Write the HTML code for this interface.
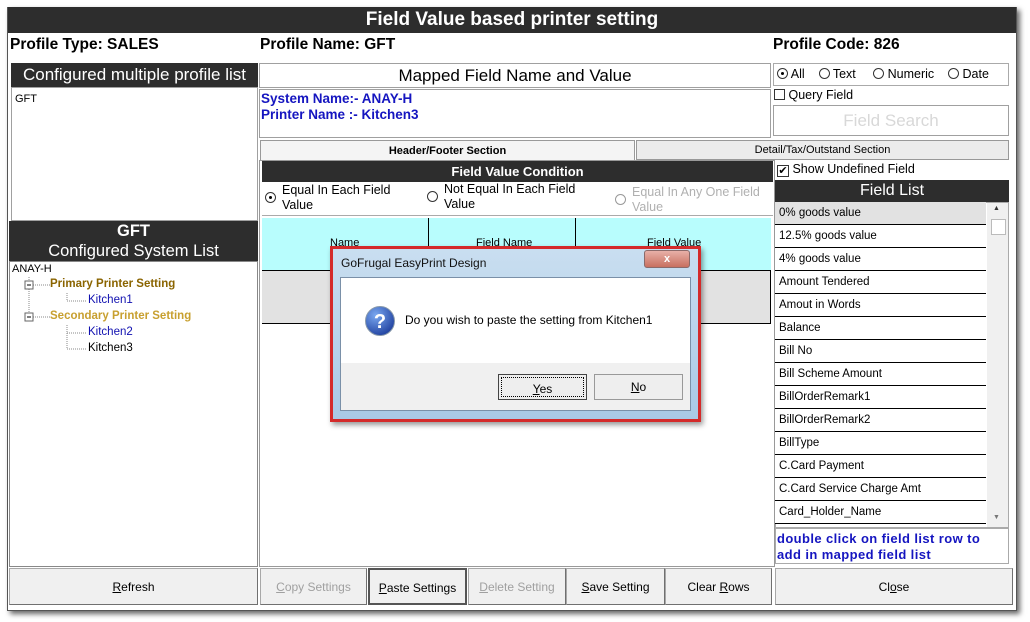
<!DOCTYPE html>
<html><head><meta charset="utf-8"><style>
*{box-sizing:border-box;margin:0;padding:0}
body{width:1030px;height:622px;background:#fff;font-family:"Liberation Sans",sans-serif;position:relative;overflow:hidden}
.a{position:absolute}
.dk{background:#2d2d2d;color:#fff;text-align:center}
.bx{border:1px solid #a0a0a0;background:#fff}
.btn{position:absolute;top:568px;height:37px;background:#f0f0f0;border:1px solid #a8a8a8;border-right-color:#707070;border-bottom-color:#707070;font-size:12px;text-align:center;line-height:36px;color:#000}
.dis{color:#a0a0a0}
.row{position:absolute;left:775px;width:211px;height:23px;border-bottom:1px solid #000;font-size:11.5px;line-height:22px;padding-left:4px;background:#fff}
.rad{display:inline-block;width:11px;height:11px;border:1px solid #333;border-radius:50%;vertical-align:-1px;position:relative}
.rad.on::after{content:"";position:absolute;left:3px;top:3px;width:3px;height:3px;border-radius:50%;background:#000}
</style></head><body>
<div class="a" style="left:7px;top:7px;width:1010px;height:604px;box-shadow:3px 3px 5px rgba(0,0,0,.6);background:#fff;border:1px solid #555"></div>
<div class="a dk" style="left:8px;top:7px;width:1008px;height:26px;font-size:19px;font-weight:bold;line-height:26px">Field Value based printer setting</div>
<div class="a" style="left:10px;top:36px;font-size:15.5px;font-weight:bold">Profile Type: SALES</div>
<div class="a" style="left:260px;top:36px;font-size:15.5px;font-weight:bold">Profile Name: GFT</div>
<div class="a" style="left:773px;top:36px;font-size:15.5px;font-weight:bold">Profile Code: 826</div>

<div class="a dk" style="left:11px;top:63px;width:247px;height:24px;font-size:17px;line-height:24px">Configured multiple profile list</div>
<div class="a bx" style="left:11px;top:87px;width:247px;height:134px;font-size:11px;padding:5px 3px">GFT</div>
<div class="a dk" style="left:9px;top:221px;width:249px;height:40px;font-size:16.5px;line-height:20px"><b>GFT</b><br>Configured System List</div>
<div class="a bx" style="left:9px;top:261px;width:249px;height:306px;border-color:#888"></div>
<div class="a" style="left:12px;top:263px;font-size:11px">ANAY-H</div>
<svg class="a" style="left:20px;top:275px" width="70" height="85"><g stroke="#888" stroke-dasharray="1,1" fill="none"><path d="M9 2V42M13 10H30M13 42H30M47 18V26H66M47 50V74H66M47 58H66"/></g><rect x="5" y="6" width="8" height="8" fill="#fff" stroke="#666"/><path d="M7 10H11" stroke="#000"/><rect x="5" y="38" width="8" height="8" fill="#fff" stroke="#666"/><path d="M7 42H11" stroke="#000"/></svg>
<div class="a" style="left:50px;top:278px;font-size:11.5px;font-weight:bold;color:#8a6400">Primary Printer Setting</div>
<div class="a" style="left:88px;top:294px;font-size:11.5px;color:#1010b0">Kitchen1</div>
<div class="a" style="left:50px;top:310px;font-size:11.5px;font-weight:bold;color:#c8a030">Secondary Printer Setting</div>
<div class="a" style="left:88px;top:326px;font-size:11.5px;color:#1010b0">Kitchen2</div>
<div class="a" style="left:88px;top:342px;font-size:11.5px">Kitchen3</div>

<div class="a bx" style="left:259px;top:63px;width:512px;height:25px;font-size:17px;text-align:center;line-height:23px">Mapped Field Name and Value</div>
<div class="a bx" style="left:259px;top:89px;width:512px;height:49px;font-size:13.5px;font-weight:bold;color:#1515c0;padding:1px 0 0 1px;line-height:16px">System Name:- ANAY-H<br>Printer Name :- Kitchen3</div>

<div class="a" style="left:260px;top:140px;width:375px;height:21px;background:#f4f4f4;border:1px solid #999;border-bottom:none;font-size:11px;font-weight:bold;text-align:center;line-height:20px">Header/Footer Section</div>
<div class="a" style="left:636px;top:140px;width:373px;height:20px;background:#ececec;border:1px solid #999;font-size:11px;text-align:center;line-height:19px">Detail/Tax/Outstand Section</div>
<div class="a" style="left:259px;top:160px;width:516px;height:407px;border:1px solid #999;background:#fff"></div>
<div class="a dk" style="left:262px;top:161px;width:511px;height:21px;font-size:13px;font-weight:bold;line-height:21px">Field Value Condition</div>
<div class="a" style="left:262px;top:182px;width:511px;height:34px;border-bottom:1px solid #aaa;font-size:12.5px;line-height:15px">
<span class="a" style="left:3px;top:9px"><span class="rad on"></span></span><span class="a" style="left:20px;top:1px">Equal In Each Field<br>Value</span>
<span class="a" style="left:165px;top:8px"><span class="rad"></span></span><span class="a" style="left:182px;top:0">Not Equal In Each Field<br>Value</span>
<span class="a" style="left:353px;top:11px"><span class="rad" style="border-color:#999"></span></span><span class="a" style="left:370px;top:3px;color:#b0b0b0">Equal In Any One Field<br>Value</span></div>
<div class="a" style="left:262px;top:218px;width:509px;height:53px;background:#b8fdfd;border-bottom:1px solid #000"></div>
<div class="a" style="left:428px;top:218px;width:1px;height:53px;background:#000"></div>
<div class="a" style="left:575px;top:218px;width:1px;height:53px;background:#000"></div>
<div class="a" style="left:330px;top:237px;font-size:11px">Name</div>
<div class="a" style="left:476px;top:237px;font-size:11px">Field Name</div>
<div class="a" style="left:647px;top:237px;font-size:11px">Field Value</div>
<div class="a" style="left:262px;top:271px;width:509px;height:53px;background:#e2e2e2;border-bottom:1px solid #000;border-right:1px solid #000"></div>

<div class="a" style="left:773px;top:63px;width:236px;height:23px;border:1px solid #aaa;font-size:12.5px;line-height:21px;padding-left:3px"><span class="rad on"></span> All &nbsp;&nbsp; <span class="rad"></span> Text &nbsp;&nbsp;&nbsp; <span class="rad"></span> Numeric &nbsp;&nbsp; <span class="rad"></span> Date</div>
<div class="a" style="left:774px;top:88px;font-size:12.5px"><span style="display:inline-block;width:11px;height:11px;border:1px solid #333;vertical-align:-1px"></span> Query Field</div>
<div class="a bx" style="left:773px;top:105px;width:236px;height:31px;font-size:17px;color:#d8d8d8;text-align:center;line-height:29px">Field Search</div>
<div class="a" style="left:777px;top:162px;font-size:12.5px"><span style="display:inline-block;width:12px;height:12px;border:1px solid #333;vertical-align:-1px;font-size:11px;line-height:10px;text-align:center">✔</span> Show Undefined Field</div>
<div class="a dk" style="left:775px;top:180px;width:234px;height:22px;font-size:16px;line-height:22px">Field List</div>
<div class="a" style="left:775px;top:202px;width:234px;height:326px;border:1px solid #aaa;background:#fff"></div>
<div class="a" style="left:987px;top:203px;width:21px;height:324px;background:#f0f0f0"></div>
<div class="a" style="left:991px;top:219px;width:15px;height:16px;background:#fff;border:1px solid #bbb"></div>
<div class="a" style="left:993px;top:205px;font-size:7px;color:#333">▲</div>
<div class="a" style="left:993px;top:514px;font-size:7px;color:#777">▼</div>
<div class="row" style="top:202px;background:#e2e2e2">0% goods value</div>
<div class="row" style="top:225px">12.5% goods value</div>
<div class="row" style="top:248px">4% goods value</div>
<div class="row" style="top:271px">Amount Tendered</div>
<div class="row" style="top:294px">Amout in Words</div>
<div class="row" style="top:317px">Balance</div>
<div class="row" style="top:340px">Bill No</div>
<div class="row" style="top:363px">Bill Scheme Amount</div>
<div class="row" style="top:386px">BillOrderRemark1</div>
<div class="row" style="top:409px">BillOrderRemark2</div>
<div class="row" style="top:432px">BillType</div>
<div class="row" style="top:455px">C.Card Payment</div>
<div class="row" style="top:478px">C.Card Service Charge Amt</div>
<div class="row" style="top:501px">Card_Holder_Name</div>
<div class="a" style="left:775px;top:528px;width:234px;height:36px;border:1px solid #aaa;font-size:13px;font-weight:bold;color:#1515c0;line-height:16px;padding:2px 1px;letter-spacing:.4px">double click on field list row to<br>add in mapped field list</div>

<div class="btn" style="left:9px;width:249px"><u>R</u>efresh</div>
<div class="btn dis" style="left:260px;width:107px"><u>C</u>opy Settings</div>
<div class="btn" style="left:368px;width:99px;border:2px solid #555"><u>P</u>aste Settings</div>
<div class="btn dis" style="left:468px;width:98px"><u>D</u>elete Setting</div>
<div class="btn" style="left:566px;width:99px"><u>S</u>ave Setting</div>
<div class="btn" style="left:665px;width:107px">Clear <u>R</u>ows</div>
<div class="btn" style="left:775px;width:238px">Cl<u>o</u>se</div>

<div class="a" style="left:330px;top:246px;width:371px;height:176px;border:3px solid #d42a2a;background:linear-gradient(#c9def0,#a9c9e6);box-shadow:2px 3px 5px rgba(0,0,0,.4)"></div>
<div class="a" style="left:341px;top:256px;font-size:12px;color:#111">GoFrugal EasyPrint Design</div>
<div class="a" style="left:644px;top:250px;width:46px;height:18px;border-radius:3px;background:linear-gradient(#e8b0a8,#c87060);border:1px solid #8a6a6a;color:#fff;font-size:11px;text-align:center;line-height:16px;font-weight:bold">x</div>
<div class="a" style="left:340px;top:277px;width:351px;height:134px;background:#f0f0f0;border:1px solid #7a90a8"></div>
<div class="a" style="left:341px;top:278px;width:349px;height:85px;background:#fff"></div>
<svg class="a" style="left:364px;top:305px" width="32" height="32"><defs><radialGradient id="g" cx=".35" cy=".3" r=".8"><stop offset="0" stop-color="#7aa8f0"/><stop offset="1" stop-color="#1a3a9a"/></radialGradient></defs><circle cx="16" cy="16" r="14.5" fill="url(#g)" stroke="#8899aa"/><text x="16" y="23" font-size="20" font-weight="bold" fill="#fff" text-anchor="middle" font-family="Liberation Sans">?</text></svg>
<div class="a" style="left:405px;top:313px;font-size:12px">Do you wish to paste the setting from Kitchen1</div>
<div class="a" style="left:498px;top:374px;width:89px;height:26px;border:1px solid #444;background:#eee;font-size:12px;text-align:center;line-height:22px"><div style="border:1px dotted #000;margin:2px;height:20px"><u>Y</u>es</div></div>
<div class="a" style="left:594px;top:374px;width:89px;height:26px;border:1px solid #999;background:#eee;font-size:12px;text-align:center;line-height:24px"><u>N</u>o</div>
</body></html>
